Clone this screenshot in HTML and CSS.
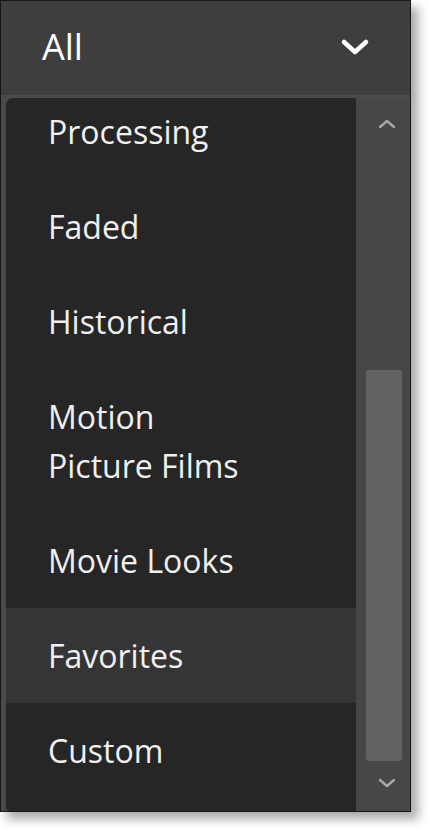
FILE: index.html
```html
<!DOCTYPE html>
<html>
<head>
<meta charset="utf-8">
<link rel="stylesheet" href="styles.css">
</head>
<body>
<div class="frame">
  <div class="picker">
    <span class="picker-label">All</span>
    <svg class="picker-chevron" width="30" height="20" viewBox="0 0 30 20">
      <path d="M4 5 L15 15 L26 5" fill="none" stroke="#fff" stroke-width="4.5" stroke-linecap="round" stroke-linejoin="round"/>
    </svg>
  </div>
  <div class="dropdown">
    <div class="list">
      <ul class="options">
        <li class="option">Processing</li>
        <li class="option">Faded</li>
        <li class="option">Historical</li>
        <li class="option">Motion<br>Picture Films</li>
        <li class="option">Movie Looks</li>
        <li class="option option-hover">Favorites</li>
        <li class="option">Custom</li>
      </ul>
    </div>
    <div class="scrollbar">
      <svg class="scroll-arrow" width="20" height="12" viewBox="0 0 20 12">
        <path d="M3 9 L10 3 L17 9" fill="none" stroke="#a8a8a8" stroke-width="2.4" stroke-linecap="round" stroke-linejoin="round"/>
      </svg>
      <div class="track">
        <div class="thumb"></div>
      </div>
      <svg class="scroll-arrow" width="20" height="12" viewBox="0 0 20 12">
        <path d="M3 3 L10 9 L17 3" fill="none" stroke="#a8a8a8" stroke-width="2.4" stroke-linecap="round" stroke-linejoin="round"/>
      </svg>
    </div>
  </div>
</div>
</body>
</html>
```
FILE: styles.css
```css
html, body {
  margin: 0;
  padding: 0;
  background: #ffffff;
}

body {
  font-family: "Open Sans", "DejaVu Sans", sans-serif;
  width: 429px;
  height: 830px;
  overflow: hidden;
}

.frame {
  width: 409px;
  height: 810px;
  border: 1px solid #161616;
  background: #474747;
  box-shadow: 7px 7px 10px rgba(0, 0, 0, 0.35);
  display: flex;
  flex-direction: column;
  overflow: hidden;
}

.picker {
  height: 94px;
  flex: none;
  background: #3e3e3e;
  border-bottom: 1px solid #4e4e4e;
  display: flex;
  align-items: center;
  justify-content: space-between;
  padding: 0 40px 0 41px;
}

.picker-label {
  color: #ffffff;
  font-size: 36px;
  line-height: 1;
  margin-top: -2px;
}

.picker-chevron {
  display: block;
  margin-top: -2px;
}

.dropdown {
  flex: 1;
  display: flex;
  min-height: 0;
  padding: 2px 0 0 5px;
  background: #4a4a4a;
}

.list {
  width: 350px;
  flex: none;
  background: #262626;
  border-radius: 7px 0 0 4px;
  overflow: hidden;
}

.options {
  list-style: none;
  margin: -14px 0 0 0;
  padding: 0;
}

.option {
  color: #f0f0f0;
  font-size: 32px;
  line-height: 49px;
  padding: 23px 0 23px 42px;
}

.option-hover {
  background: #353535;
}

.scrollbar {
  flex: 1;
  background: #474747;
  display: flex;
  flex-direction: column;
  align-items: center;
  padding: 20px 0 22px 0;
}

.scroll-arrow {
  display: block;
  flex: none;
  margin-left: 8px;
}

.track {
  flex: 1;
  width: 100%;
  display: flex;
  flex-direction: column;
  justify-content: flex-end;
  padding: 0 8px 16px 10px;
  box-sizing: border-box;
}

.thumb {
  height: 391px;
  background: #626262;
  border-radius: 3px;
}
```
